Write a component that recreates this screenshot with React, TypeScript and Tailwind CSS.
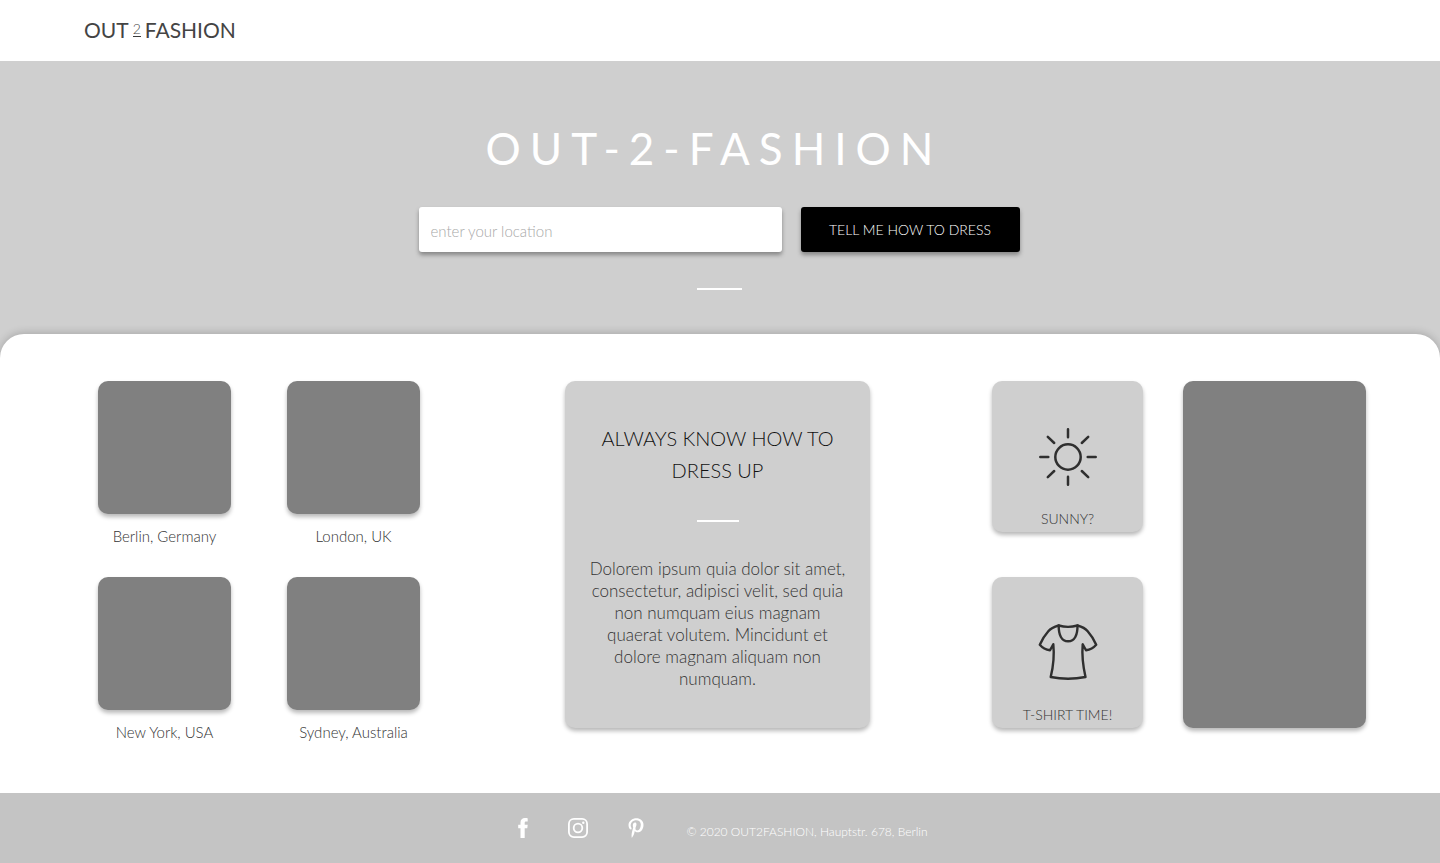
import { FaPinterestP } from "react-icons/fa";

const cities = ["Berlin, Germany", "London, UK", "New York, USA", "Sydney, Australia"];

const cardShadow = "shadow-[0_3px_4px_rgba(0,0,0,0.28)]";

function SunIcon() {
  return (
    <svg viewBox="0 0 60 60" className="size-[60px]" fill="none" stroke="#2f2f2f" strokeWidth="2.5" strokeLinecap="round" aria-hidden="true">
      <circle cx="30" cy="30" r="12.7" />
      <path d="M30 2.3v8M30 49.7v8M2.3 30h8M49.7 30h8M9.8 9.8l6.4 6.2M50.2 9.8l-6.4 6.2M9.8 50.2l6.4-6.2M50.2 50.2l-6.4-6.2" />
    </svg>
  );
}

function ShirtIcon() {
  return (
    <svg viewBox="0 0 60 60" className="size-[60px]" fill="none" stroke="#2f2f2f" strokeWidth="2.4" strokeLinejoin="round" strokeLinecap="round" aria-hidden="true">
      <path d="M20.7 2.5C26.5 4.2 33.5 4.2 39.5 2.5C44 3.8 47.2 5.3 49.7 8.3C53.6 12.8 56.4 17.4 58.2 21.7C55.6 24.7 52.3 26.6 48 27.3L44.7 21.2C43.7 33 45.2 44 47.5 54C36 56.2 24 56.2 12.7 54C15.2 44 16.5 33 15.3 21.2L12 27.3C7.7 26.6 4.4 24.7 1.8 21.7C3.6 17.4 6.4 12.8 10.3 8.3C12.8 5.3 16.2 3.8 20.7 2.5Z" />
      <path d="M20.7 2.5C20.6 12 23.5 18.3 30.1 18.3C36.7 18.3 39.6 12 39.5 2.5" />
    </svg>
  );
}

function FacebookIcon() {
  return (
    <svg viewBox="0 0 10 20" className="h-5 w-[10px]" fill="currentColor" aria-hidden="true">
      <path d="M9.7 0.2V3.6H7.9C6.9 3.6 6.7 4.2 6.7 5V6.8H9.7L9.3 10.2H6.7V20H2.5V10.2H0.2V6.8H2.5V4.4C2.5 1.6 4.3 0 6.9 0C8.2 0 9.3 0.1 9.7 0.2Z" />
    </svg>
  );
}

function InstagramIcon() {
  return (
    <svg viewBox="0 0 20 20" className="size-5" fill="none" stroke="currentColor" strokeWidth="1.8" aria-hidden="true">
      <rect x="0.9" y="0.9" width="18.2" height="18.2" rx="5" />
      <circle cx="10" cy="10" r="4.3" />
      <circle cx="15.3" cy="4.7" r="1.2" fill="currentColor" stroke="none" />
    </svg>
  );
}

function WeatherCard({ label, icon }: { label: string; icon: React.ReactNode }) {
  return (
    <article className={`flex h-[151px] flex-col items-center justify-between rounded-[10px] bg-[#cfcfcf] pt-[46px] pb-1 ${cardShadow}`}>
      {icon}
      <h3 className="text-sm leading-[18px] font-light text-[#333]">{label}</h3>
    </article>
  );
}

export default function App() {
  return (
    <div className="min-h-screen bg-[#cfcfcf] font-['Lato','Open_Sans',sans-serif] text-[#333]">
      <header className="flex h-[61px] items-center bg-white px-[84px]">
        <a href="#" className="flex items-center pb-0.5 text-[21px] leading-[30px] text-[#444]">
          <span>OUT</span>
          <span className="mx-1 border-b border-[#3a3a3a] text-sm leading-[14px] font-light">2</span>
          <span>FASHION</span>
        </a>
      </header>

      <section className="flex flex-col items-center pt-[59px] pr-0.5 pb-11">
        <h1 className="pr-2.5 text-[44px] leading-[56px] tracking-[9px] text-white">OUT-2-FASHION</h1>
        <form className="mt-[31px] flex gap-[19px]" onSubmit={(e) => e.preventDefault()}>
          <input
            type="text"
            aria-label="Location"
            placeholder="enter your location"
            className="h-[45px] w-[363px] rounded-[3px] bg-white px-3 pt-0.5 text-[15px] font-light text-[#333] shadow-[0_3px_4px_rgba(0,0,0,0.35)] placeholder:text-[#a8a8a8]"
          />
          <button type="submit" className="h-[45px] w-[219px] rounded-[3px] bg-black text-sm font-light text-white shadow-[0_3px_4px_rgba(0,0,0,0.35)]">
            TELL ME HOW TO DRESS
          </button>
        </form>
        <div className="mt-9 h-0.5 w-[45px] bg-white" />
      </section>

      <main className="flex rounded-t-[24px] bg-white pt-[47px] pr-[74px] pb-[50px] pl-[98px] shadow-[0_-1px_8px_rgba(0,0,0,0.2)]">
        <section className="grid grid-cols-[133px_133px] gap-x-14 gap-y-[30px]">
          {cities.map((city) => (
            <figure key={city}>
              <div className={`h-[133px] rounded-[10px] bg-[#808080] ${cardShadow}`} />
              <figcaption className="pt-3 text-center text-[15px] leading-[21px] font-light whitespace-nowrap">{city}</figcaption>
            </figure>
          ))}
        </section>

        <div className="flex flex-1 justify-center pl-[23px]">
          <section className={`flex h-[347px] w-[305px] flex-col items-center rounded-[10px] bg-[#cfcfcf] px-5 pt-[41px] text-center ${cardShadow}`}>
            <h2 className="text-xl leading-8 font-light text-[#111]">
              ALWAYS KNOW HOW TO
              <br />
              DRESS UP
            </h2>
            <div className="mt-[34px] h-0.5 w-[42px] bg-white" />
            <p className="mt-9 text-[17px] leading-[22px] font-light">
              Dolorem ipsum quia dolor sit amet,
              <br />
              consectetur, adipisci velit, sed quia
              <br />
              non numquam eius magnam
              <br />
              quaerat volutem. Mincidunt et
              <br />
              dolore magnam aliquam non
              <br />
              numquam.
            </p>
          </section>
        </div>

        <section className="flex gap-10">
          <div className="flex w-[151px] flex-col gap-[45px]">
            <WeatherCard label="SUNNY?" icon={<SunIcon />} />
            <WeatherCard label="T-SHIRT TIME!" icon={<ShirtIcon />} />
          </div>
          <div className={`h-[347px] w-[183px] rounded-[10px] bg-[#808080] ${cardShadow}`} />
        </section>
      </main>

      <footer className="flex h-[70px] items-center justify-center bg-[#c4c4c4] pl-[6px] text-white">
        <nav className="flex items-center gap-10">
          <a href="#" aria-label="Facebook"><FacebookIcon /></a>
          <a href="#" aria-label="Instagram"><InstagramIcon /></a>
          <a href="#" aria-label="Pinterest"><FaPinterestP className="h-5 w-4" /></a>
        </nav>
        <p className="ml-[42px] pt-2 text-xs leading-4 font-light">© 2020 OUT2FASHION, Hauptstr. 678, Berlin</p>
      </footer>
    </div>
  );
}
